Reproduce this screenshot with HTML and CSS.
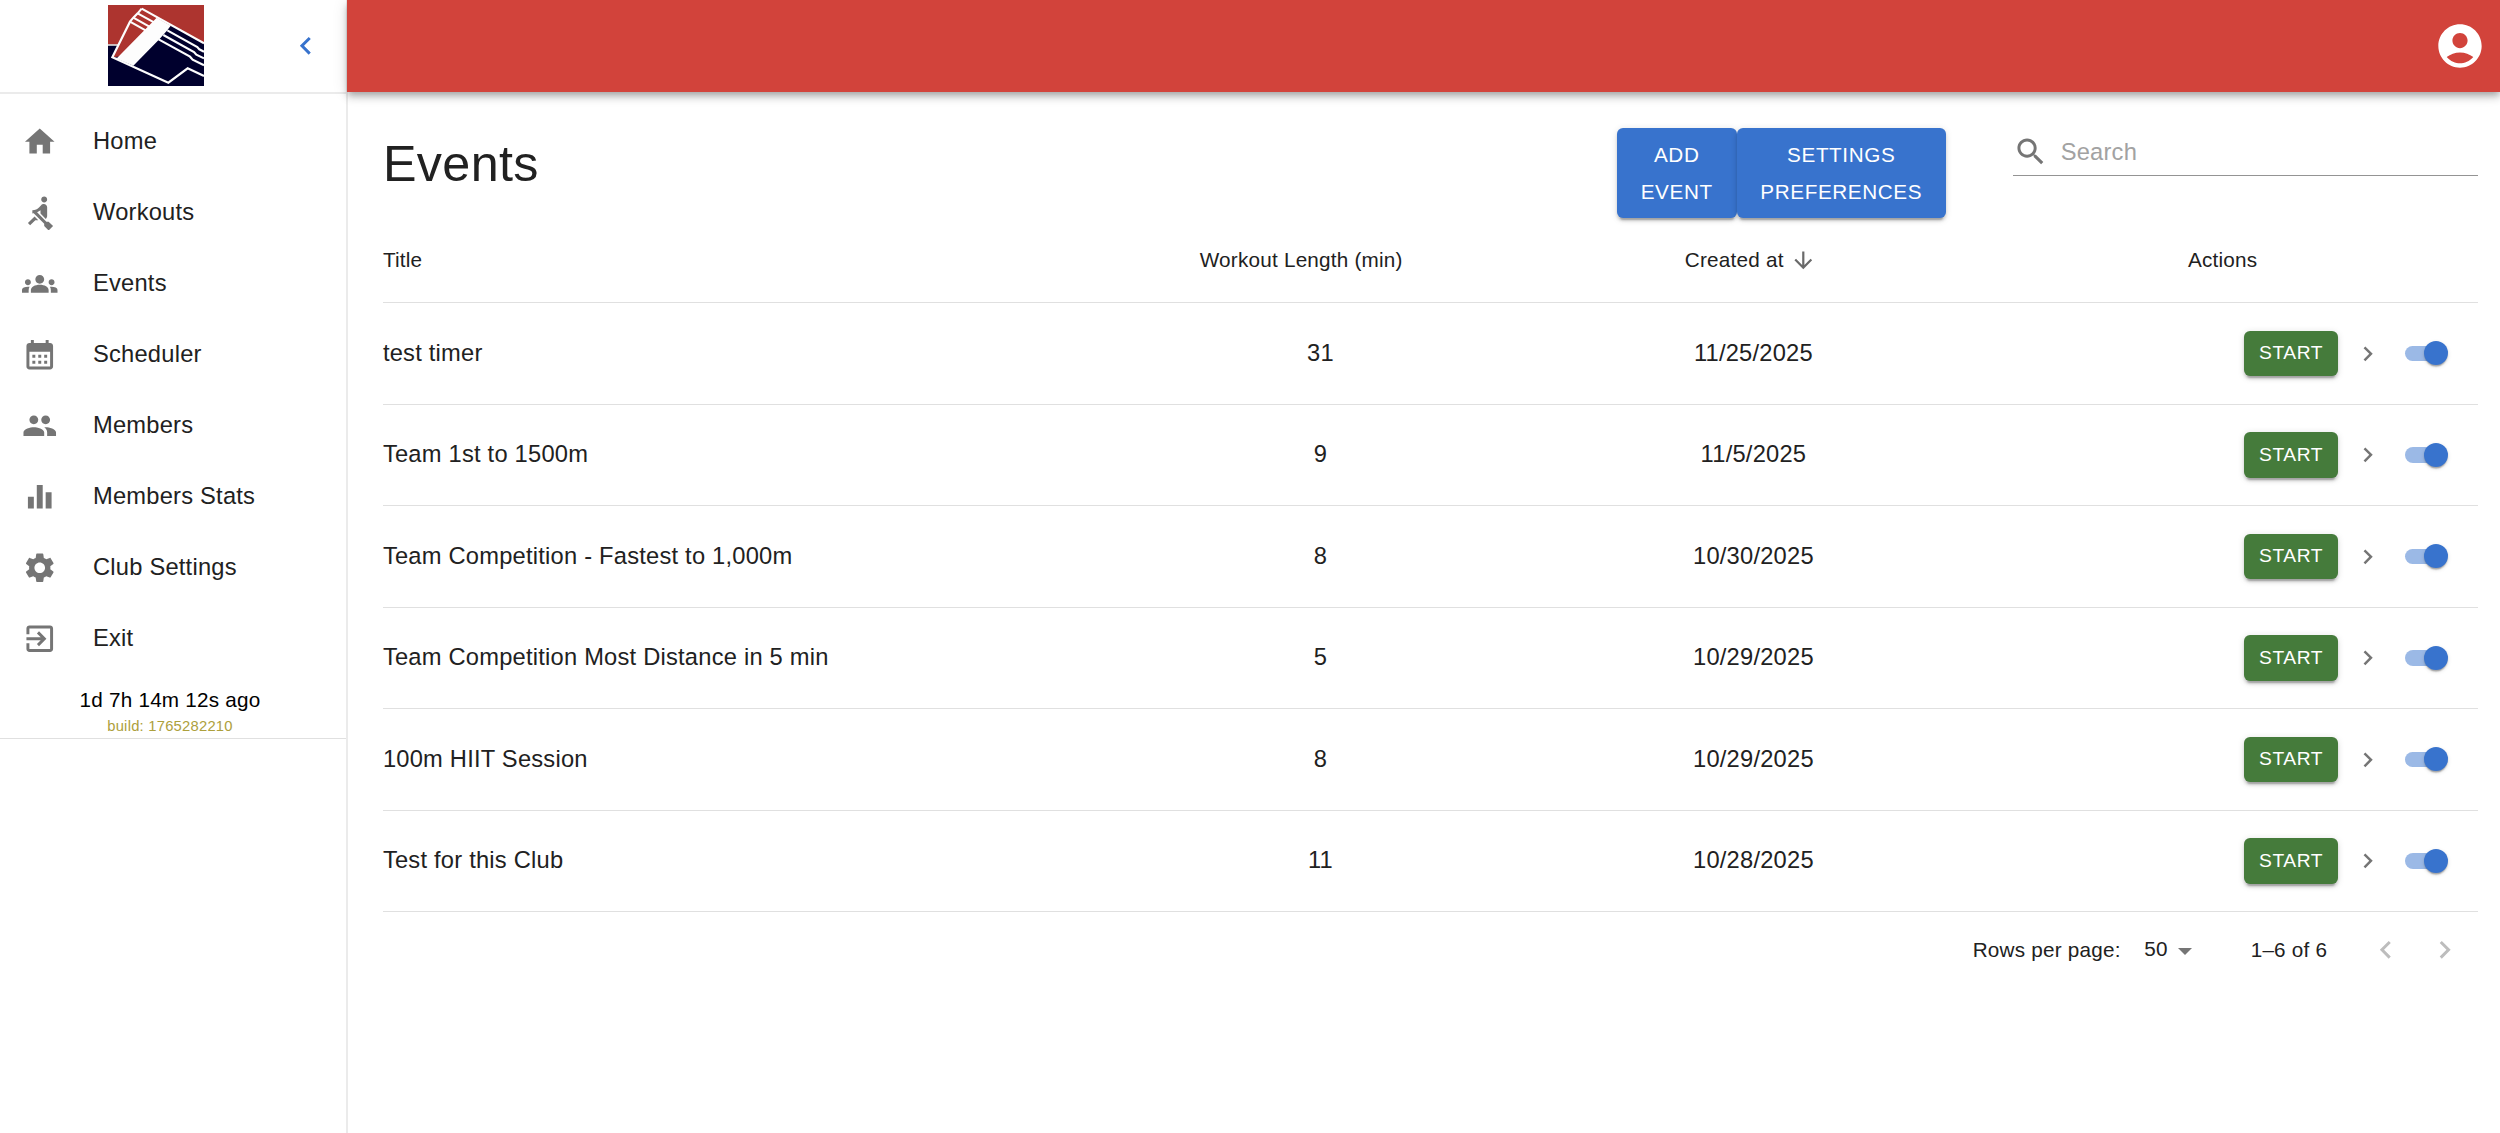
FILE: index.html
```html
<!DOCTYPE html>
<html lang="en">
<head>
<meta charset="utf-8">
<title>Events</title>
<link rel="stylesheet" href="styles.css">
</head>
<body>
<svg class="defs" width="0" height="0">
  <symbol id="left" viewBox="0 0 24 24"><path d="M15.41 7.41 14 6l-6 6 6 6 1.41-1.41L10.83 12z"/></symbol>
  <symbol id="right" viewBox="0 0 24 24"><path d="M10 6 8.59 7.41 13.17 12l-4.58 4.59L10 18l6-6z"/></symbol>
  <symbol id="down" viewBox="0 0 24 24"><path d="m20 12-1.41-1.41L13 16.17V4h-2v12.17l-5.58-5.59L4 12l8 8 8-8z"/></symbol>
</svg>
<div class="app">
  <aside class="sidebar">
    <div class="brand">
      <svg class="logo" viewBox="0 0 288 243">
        <rect width="288" height="243" fill="#ad342f"/>
        <rect y="120" width="288" height="123" fill="#00002d"/>
        <path d="M0 120H30" stroke="#d9d9d9" stroke-width="5"/>
        <path d="M13 157 66 50 101 11 288 115V213L239 190 181 233z" fill="#00002d"/>
        <path d="M13 157 66 50 101 11 189 62 80 150z" fill="#ad342f"/>
        <path d="M146 38 188 62 178 76 154 103 76 182 20 158 28 158z" fill="#fdfdfd"/>
        <g fill="none" stroke="#fdfdfd" stroke-width="6.5">
          <path d="M101 11 288 115M178 76 268 126 274 133 288 140M166 90 258 141 265 149 288 160M152 103 246 155 254 164 288 181"/>
          <path d="M66 50 114 77M76 38 124 65M89 25 138 52"/>
          <path d="M288 213 239 190 181 233 13 157 66 50 76 38 89 25 101 11"/>
        </g>
      </svg>
      <svg class="icon collapse"><use href="#left"/></svg>
    </div>
    <nav class="nav">
      <a class="nav-item"><svg class="icon" viewBox="0 0 24 24"><path d="M10 20v-6h4v6h5v-8h3L12 3 2 12h3v8z"/></svg>Home</a>
      <a class="nav-item"><svg class="icon" viewBox="0 0 24 24"><path d="M8.5 14.5 4 19l1.5 1.5L9 17h2l-2.5-2.5zM15 1c-1.1 0-2 .9-2 2s.9 2 2 2 2-.9 2-2-.9-2-2-2zm6 20.01L18 24l-2.99-3.01V19.5l-7.1-7.09c-.31.05-.61.07-.91.07v-2.16c1.66.03 3.61-.87 4.67-2.04l1.4-1.55c.19-.21.43-.38.69-.5.29-.14.62-.23.96-.23h.03C15.99 6.01 17 7.02 17 8.26v5.75c0 .84-.35 1.61-.92 2.16l-3.58-3.58v-2.27c-.63.52-1.43 1.02-2.29 1.39L16.5 18H18l3 3.01z"/></svg>Workouts</a>
      <a class="nav-item"><svg class="icon" viewBox="0 0 24 24"><path d="M12 12.75c1.63 0 3.07.39 4.24.9 1.08.48 1.76 1.56 1.76 2.73V18H6v-1.61c0-1.18.68-2.26 1.76-2.73 1.17-.52 2.61-.91 4.24-.91zM4 13c1.1 0 2-.9 2-2s-.9-2-2-2-2 .9-2 2 .9 2 2 2zm1.13 1.1c-.37-.06-.74-.1-1.13-.1-.99 0-1.93.21-2.78.58C.48 14.9 0 15.62 0 16.43V18h4.5v-1.61c0-.83.23-1.61.63-2.29zM20 13c1.1 0 2-.9 2-2s-.9-2-2-2-2 .9-2 2 .9 2 2 2zm4 3.43c0-.81-.48-1.53-1.22-1.85-.85-.37-1.79-.58-2.78-.58-.39 0-.76.04-1.13.1.4.68.63 1.46.63 2.29V18H24v-1.57zM12 6c1.66 0 3 1.34 3 3s-1.34 3-3 3-3-1.34-3-3 1.34-3 3-3z"/></svg>Events</a>
      <a class="nav-item"><svg class="icon" viewBox="0 0 24 24"><path d="M19 4h-1V2h-2v2H8V2H6v2H5c-1.11 0-1.99.9-1.99 2L3 20c0 1.1.89 2 2 2h14c1.1 0 2-.9 2-2V6c0-1.1-.9-2-2-2zm0 16H5V10h14v10zM9 14H7v-2h2v2zm4 0h-2v-2h2v2zm4 0h-2v-2h2v2zm-8 4H7v-2h2v2zm4 0h-2v-2h2v2zm4 0h-2v-2h2v2z"/></svg>Scheduler</a>
      <a class="nav-item"><svg class="icon" viewBox="0 0 24 24"><path d="M16 11c1.66 0 2.99-1.34 2.99-3S17.66 5 16 5c-1.66 0-3 1.34-3 3s1.34 3 3 3zm-8 0c1.66 0 2.99-1.34 2.99-3S9.66 5 8 5C6.34 5 5 6.34 5 8s1.34 3 3 3zm0 2c-2.33 0-7 1.17-7 3.5V19h14v-2.5c0-2.33-4.67-3.5-7-3.5zm8 0c-.29 0-.62.02-.97.05 1.16.84 1.97 1.97 1.97 3.45V19h6v-2.5c0-2.33-4.67-3.5-7-3.5z"/></svg>Members</a>
      <a class="nav-item"><svg class="icon" viewBox="0 0 24 24"><path d="M10 20h4V4h-4v16zm-6 0h4v-8H4v8zM16 9v11h4V9h-4z"/></svg>Members Stats</a>
      <a class="nav-item"><svg class="icon" viewBox="0 0 24 24"><path d="M19.14 12.94c.04-.3.06-.61.06-.94 0-.32-.02-.64-.07-.94l2.03-1.58c.18-.14.23-.41.12-.61l-1.92-3.32c-.12-.22-.37-.29-.59-.22l-2.39.96c-.5-.38-1.03-.7-1.62-.94l-.36-2.54c-.04-.24-.24-.41-.48-.41h-3.84c-.24 0-.43.17-.47.41l-.36 2.54c-.59.24-1.13.57-1.62.94l-2.39-.96c-.22-.08-.47 0-.59.22L2.74 8.87c-.12.21-.08.47.12.61l2.03 1.58c-.05.3-.09.63-.09.94s.02.64.07.94l-2.03 1.58c-.18.14-.23.41-.12.61l1.92 3.32c.12.22.37.29.59.22l2.39-.96c.5.38 1.03.7 1.62.94l.36 2.54c.05.24.24.41.48.41h3.84c.24 0 .44-.17.47-.41l.36-2.54c.59-.24 1.13-.56 1.62-.94l2.39.96c.22.08.47 0 .59-.22l1.92-3.32c.12-.22.07-.47-.12-.61l-2.01-1.58zM12 15.6c-1.98 0-3.6-1.62-3.6-3.6s1.62-3.6 3.6-3.6 3.6 1.62 3.6 3.6-1.62 3.6-3.6 3.6z"/></svg>Club Settings</a>
      <a class="nav-item"><svg class="icon" viewBox="0 0 24 24"><path d="M10.09 15.59 11.5 17l5-5-5-5-1.41 1.41L12.67 11H3v2h9.67l-2.58 2.59zM19 3H5c-1.11 0-2 .9-2 2v4h2V5h14v14H5v-4H3v4c0 1.1.89 2 2 2h14c1.1 0 2-.9 2-2V5c0-1.1-.9-2-2-2z"/></svg>Exit</a>
    </nav>
    <div class="build">
      <div class="build-age">1d 7h 14m 12s ago</div>
      <div class="build-id">build: 1765282210</div>
    </div>
  </aside>
  <div class="content">
    <header class="appbar">
      <svg class="avatar" viewBox="0 0 24 24"><path d="M12 2C6.48 2 2 6.48 2 12s4.48 10 10 10 10-4.48 10-10S17.52 2 12 2zm0 4c1.93 0 3.5 1.57 3.5 3.5S13.93 13 12 13s-3.5-1.57-3.5-3.5S10.07 6 12 6zm0 14c-2.03 0-4.43-.82-6.14-2.88C7.55 15.8 9.68 15 12 15s4.45.8 6.14 2.12C16.43 19.18 14.03 20 12 20z"/></svg>
    </header>
    <main class="main">
      <div class="toolbar">
        <h4 class="title">Events</h4>
        <div class="buttons">
          <button class="btn add">ADD<br>EVENT</button>
          <button class="btn prefs">SETTINGS<br>PREFERENCES</button>
        </div>
        <div class="search">
          <svg class="icon" viewBox="0 0 24 24"><path d="M15.5 14h-.79l-.28-.27C15.41 12.59 16 11.11 16 9.5 16 5.91 13.09 3 9.5 3S3 5.91 3 9.5 5.91 16 9.5 16c1.61 0 3.09-.59 4.23-1.57l.27.28v.79l5 4.99L20.49 19l-4.99-5zm-6 0C7.01 14 5 11.99 5 9.5S7.01 5 9.5 5 14 7.01 14 9.5 11.99 14 9.5 14z"/></svg>
          <span>Search</span>
        </div>
      </div>
      <div class="row head">
        <div>Title</div>
        <div class="center">Workout Length (min)<span class="sort"></span></div>
        <div class="center">Created at<svg class="sort"><use href="#down"/></svg></div>
        <div class="center">Actions<span class="sort"></span></div>
      </div>
      <div class="row"><div>test timer</div><div class="center">31</div><div class="center">11/25/2025</div><div class="actions"><button class="start">START</button><svg class="go"><use href="#right"/></svg><span class="switch"></span></div></div>
      <div class="row"><div>Team 1st to 1500m</div><div class="center">9</div><div class="center">11/5/2025</div><div class="actions"><button class="start">START</button><svg class="go"><use href="#right"/></svg><span class="switch"></span></div></div>
      <div class="row"><div>Team Competition - Fastest to 1,000m</div><div class="center">8</div><div class="center">10/30/2025</div><div class="actions"><button class="start">START</button><svg class="go"><use href="#right"/></svg><span class="switch"></span></div></div>
      <div class="row"><div>Team Competition Most Distance in 5 min</div><div class="center">5</div><div class="center">10/29/2025</div><div class="actions"><button class="start">START</button><svg class="go"><use href="#right"/></svg><span class="switch"></span></div></div>
      <div class="row"><div>100m HIIT Session</div><div class="center">8</div><div class="center">10/29/2025</div><div class="actions"><button class="start">START</button><svg class="go"><use href="#right"/></svg><span class="switch"></span></div></div>
      <div class="row"><div>Test for this Club</div><div class="center">11</div><div class="center">10/28/2025</div><div class="actions"><button class="start">START</button><svg class="go"><use href="#right"/></svg><span class="switch"></span></div></div>
      <div class="pager">
        <span>Rows per page:</span>
        <span class="size">50<i class="caret"></i></span>
        <span class="range">1–6 of 6</span>
        <svg class="icon prev"><use href="#left"/></svg>
        <svg class="icon next"><use href="#right"/></svg>
      </div>
    </main>
  </div>
</div>
</body>
</html>
```
FILE: styles.css
```css
* { box-sizing: border-box; }
body {
  margin: 0;
  background: #fff;
  color: #212121;
  font-family: "Liberation Sans", Arial, sans-serif;
  font-size: 23.7px;
  letter-spacing: 0.00938em;
}
.defs { display: block; position: absolute; }
.app { display: flex; height: 1133px; overflow: hidden; }
.icon { width: 35.5px; height: 35.5px; fill: #757575; flex: none; }

.sidebar { width: 348px; flex: none; border-right: 2px solid #ebebeb; }
.brand {
  height: 94px;
  border-bottom: 2px solid #ebebeb;
  display: flex;
  align-items: flex-start;
  padding: 5px 23px 0 108px;
  justify-content: space-between;
}
.logo { width: 96px; height: 81px; }
.collapse { fill: #3873cd; margin-top: 22.5px; }
.nav { padding-top: 11.8px; }
.nav-item { display: flex; align-items: center; height: 71px; padding-left: 22.3px; gap: 35.2px; }
.build {
  height: 65.2px;
  border-bottom: 1px solid #e0e0e0;
  padding: 10px 6px 0 0;
  text-align: center;
}
.build-age { color: #000; font-size: 20.7px; line-height: 31px; }
.build-id { color: #ada03c; font-size: 14.8px; line-height: 22px; }

.content { flex: 1; min-width: 0; margin-left: -0.7px; }
.appbar {
  position: relative;
  height: 92.4px;
  background: #d2433b;
  display: flex;
  justify-content: flex-end;
  padding: 19.5px 13.6px 0 0;
  box-shadow: 0 3px 6px -1.5px rgba(0,0,0,.2), 0 6px 7.4px rgba(0,0,0,.14), 0 1.5px 14.8px rgba(0,0,0,.12);
}
.avatar { width: 52px; height: 52px; fill: #fff; }
.main { padding: 36px 22.3px 0 35.6px; }

.toolbar { display: flex; height: 108px; }
.title { margin: 0; width: 1233.8px; font-size: 50.3px; font-weight: 400; line-height: 72px; letter-spacing: 0.00735em; }
.buttons { display: flex; width: 396.2px; align-items: flex-start; }
.btn {
  font: 20.7px/37px "Liberation Sans", Arial, sans-serif;
  letter-spacing: 0.02857em;
  color: #fff;
  background: #3873cd;
  border: 0;
  border-radius: 6px;
  height: 90px;
  padding: 8px 0;
  box-shadow: 0 4.4px 1.5px -3px rgba(0,0,0,.2), 0 3px 3px rgba(0,0,0,.14), 0 1.5px 7.4px rgba(0,0,0,.12);
}
.add { width: 120px; }
.prefs { width: 209px; }
.search {
  flex: 1;
  height: 47.4px;
  border-bottom: 1px solid #949494;
  display: flex;
  align-items: center;
  gap: 12.3px;
  color: #a2a2a2;
}
.search span { padding-top: 1px; }

.row {
  display: grid;
  grid-template-columns: 757px 361px 505px 1fr;
  align-items: center;
  height: 101.5px;
  border-bottom: 1px solid #e0e0e0;
}
.head { height: 66.8px; padding-bottom: 18px; font-size: 20.7px; letter-spacing: 0.01071em; }
.center { display: flex; justify-content: center; align-items: center; }
.sort { width: 26.6px; height: 26.6px; margin: 0 5.9px; fill: #6a6a6a; }
.actions { display: flex; align-items: center; justify-content: flex-end; padding-right: 30px; }
.start {
  width: 94px;
  height: 45.5px;
  padding: 0;
  border: 0;
  border-radius: 6px;
  color: #fff;
  background: #457b3b;
  font: 19.24px "Liberation Sans", Arial, sans-serif;
  letter-spacing: 0.02857em;
  box-shadow: 0 4.4px 1.5px -3px rgba(0,0,0,.2), 0 3px 3px rgba(0,0,0,.14), 0 1.5px 7.4px rgba(0,0,0,.12);
}
.go { width: 29.6px; height: 29.6px; fill: #757575; margin: 0 22px 0 15px; }
.switch { width: 43px; height: 24px; display: flex; align-items: center; justify-content: flex-end; position: relative; }
.switch::before { content: ""; position: absolute; left: 0; width: 38.5px; height: 15.5px; border-radius: 8px; background: #9bb9e6; }
.switch::after {
  content: "";
  position: relative;
  width: 24px;
  height: 24px;
  border-radius: 50%;
  background: #3873cd;
  box-shadow: 0 3px 1.5px -1.5px rgba(0,0,0,.2), 0 1.5px 1.5px rgba(0,0,0,.14), 0 1.5px 4.4px rgba(0,0,0,.12);
}

.pager {
  height: 76px;
  display: flex;
  align-items: center;
  justify-content: flex-end;
  font-size: 20.7px;
  letter-spacing: 0.01071em;
}
.size { display: flex; align-items: center; gap: 10px; margin: -2px 59px 0 23.5px; }
.caret { border: 7.4px solid transparent; border-top-color: #757575; border-bottom: 0; margin-top: 4px; }
.range { margin-right: 40.5px; }
.pager .icon { fill: #bdbdbd; }
.prev { margin-right: 24px; }
.next { margin-right: 15px; }
```
